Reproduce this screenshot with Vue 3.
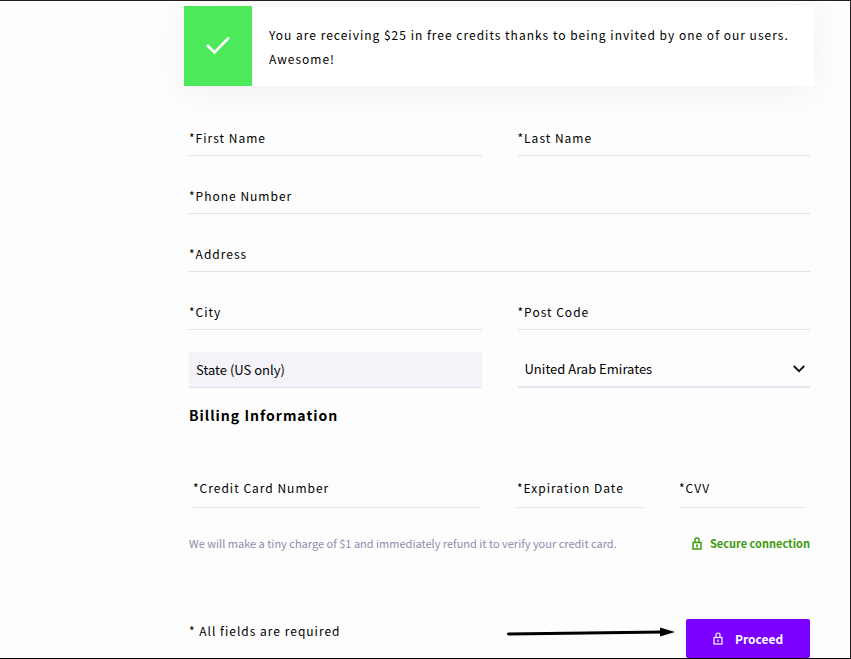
<script setup>
import { ref } from 'vue'

const personal = ref([
  { id: 'first-name', label: '*First Name', value: '', wide: false },
  { id: 'last-name', label: '*Last Name', value: '', wide: false },
  { id: 'phone', label: '*Phone Number', value: '', wide: true },
  { id: 'address', label: '*Address', value: '', wide: true },
  { id: 'city', label: '*City', value: '', wide: false },
  { id: 'post-code', label: '*Post Code', value: '', wide: false },
])

const card = ref([
  { id: 'card-number', label: '*Credit Card Number', value: '', wide: true },
  { id: 'expiration', label: '*Expiration Date', value: '', wide: false },
  { id: 'cvv', label: '*CVV', value: '', wide: false },
])

const country = ref('United Arab Emirates')
</script>

<template>
  <main class="page">
    <div class="notice">
      <div class="notice-icon">
        <svg width="26" height="20" viewBox="0 0 26 20">
          <path d="M2 9 L9.5 16.5 L24 1.5" fill="none" stroke="#fff" stroke-width="2.6" />
        </svg>
      </div>
      <p>You are receiving $25 in free credits thanks to being invited by one of our users. Awesome!</p>
    </div>

    <form @submit.prevent>
      <div class="grid">
        <div v-for="field in personal" :key="field.id" class="field" :class="{ wide: field.wide }">
          <label v-show="!field.value" :for="field.id">{{ field.label }}</label>
          <input :id="field.id" v-model="field.value" type="text" />
        </div>

        <div class="field state">
          <label for="state">State (US only)</label>
          <input id="state" type="text" disabled />
        </div>

        <div class="field country">
          <select id="country" v-model="country" aria-label="Country">
            <option>United Arab Emirates</option>
            <option>United Kingdom</option>
            <option>United States</option>
          </select>
          <svg width="12" height="8" viewBox="0 0 12 8">
            <path d="M0.8 1 L6 6.2 L11.2 1" fill="none" stroke="#111" stroke-width="1.8" />
          </svg>
        </div>
      </div>

      <h2>Billing Information</h2>

      <div class="card-grid">
        <div v-for="field in card" :key="field.id" class="field" :class="{ double: field.wide }">
          <label v-show="!field.value" :for="field.id">{{ field.label }}</label>
          <input :id="field.id" v-model="field.value" type="text" />
        </div>
      </div>

      <div class="info">
        <p>We will make a tiny charge of $1 and immediately refund it to verify your credit card.</p>
        <span class="secure">
          <svg width="10" height="13" viewBox="0 0 10 13">
            <path d="M3 5.5 V2.8 Q3 1 5 1 Q7 1 7 2.8 V5.5" fill="none" stroke="currentColor" stroke-width="1.5" />
            <rect x="1" y="5.5" width="8" height="6.5" fill="none" stroke="currentColor" stroke-width="1.5" />
            <path d="M5 7.3 V10.4" stroke="currentColor" stroke-width="1.5" />
          </svg>
          Secure connection
        </span>
      </div>

      <div class="actions">
        <p>* All fields are required</p>
        <svg class="arrow" width="168" height="26" viewBox="0 0 168 26">
          <path d="M1.5 15 L156 13" stroke="#000" stroke-width="3" stroke-linecap="round" />
          <path d="M153 8.5 L168 13 L153 17.5 Z" fill="#000" />
        </svg>
        <button type="submit">
          <svg width="10" height="13" viewBox="0 0 10 13">
            <path d="M3 5.5 V2.8 Q3 1 5 1 Q7 1 7 2.8 V5.5" fill="none" stroke="currentColor" stroke-width="1.2" />
            <rect x="1" y="5.5" width="8" height="6.5" fill="none" stroke="currentColor" stroke-width="1.2" />
            <path d="M5 7.5 V10" stroke="currentColor" stroke-width="1.2" />
          </svg>
          Proceed
        </button>
      </div>
    </form>
  </main>
</template>

<style>
body {
  margin: 0;
  background: #fdfdfd;
}
</style>

<style scoped>
.page {
  box-sizing: border-box;
  min-height: 100vh;
  padding: 5px 36px 0 184px;
  border: 1px solid #231f20;
  border-left: 0;
  border-bottom-color: #000;
  font-family: "Noto Sans CJK SC", sans-serif;
  font-size: 12px;
  line-height: 24px;
  color: #000;
}

p {
  margin: 0;
}

.notice {
  display: flex;
  min-height: 80px;
  background: #fff;
  box-shadow: 0 4px 32px rgba(0, 0, 0, 0.05);
  letter-spacing: 1px;
}

.notice-icon {
  display: flex;
  align-items: center;
  justify-content: center;
  flex: 0 0 68px;
  background: #4cea5b;
}

.notice p {
  padding: 17px 16px 15px 17px;
}

form {
  padding: 34px 4px 0 5px;
}

.grid {
  display: grid;
  grid-template-columns: 1fr 1fr;
  gap: 22px 36px;
}

.wide {
  grid-column: 1 / -1;
}

/* label and control share one cell, the label sits on top like a placeholder */
.field {
  display: grid;
  align-items: center;
  height: 36px;
  box-sizing: border-box;
  border-bottom: 1px solid #e3e3e5;
  letter-spacing: 1px;
}

.field > * {
  grid-area: 1 / 1;
}

.field label {
  z-index: 1;
  pointer-events: none;
}

input,
select {
  width: 100%;
  height: 100%;
  margin: 0;
  padding: 0;
  border: 0;
  outline: 0;
  background: transparent;
  font: inherit;
  letter-spacing: inherit;
  color: inherit;
}

.state {
  padding-left: 7px;
  background: #f4f3f9;
  border-color: #e2e1ea;
  font-size: 13px;
  letter-spacing: normal;
}

.country {
  border-bottom: 2px solid #e6e5f1;
  font-size: 13px;
  letter-spacing: normal;
}

.country select {
  padding-left: 7px;
  appearance: none;
}

.country svg {
  justify-self: end;
  margin-right: 5px;
  pointer-events: none;
}

h2 {
  margin: 15px 0 41px;
  font-size: 14px;
  line-height: 24px;
  font-weight: 700;
  letter-spacing: 1px;
}

.card-grid {
  display: grid;
  grid-template-columns: repeat(4, 1fr);
  gap: 36px;
  padding: 0 5px 0 4px;
}

.card-grid .field {
  height: 40px;
}

.double {
  grid-column: span 2;
}

.info {
  display: flex;
  align-items: center;
  justify-content: space-between;
  margin-top: 23px;
  font-size: 11px;
  color: #8d8cab;
}

.secure {
  display: flex;
  align-items: center;
  gap: 8px;
  font-weight: 700;
  color: #3c9a0c;
}

.actions {
  display: flex;
  align-items: flex-start;
  margin-top: 64px;
}

.actions p {
  letter-spacing: 1px;
}

.arrow {
  margin-left: auto;
  margin-right: 11px;
}

button {
  display: flex;
  align-items: center;
  justify-content: center;
  gap: 12px;
  width: 124px;
  height: 39px;
  padding: 0;
  border: 0;
  border-radius: 2px;
  background: #7b00ff;
  color: #fff;
  font: inherit;
  font-weight: 700;
  cursor: pointer;
}
</style>
